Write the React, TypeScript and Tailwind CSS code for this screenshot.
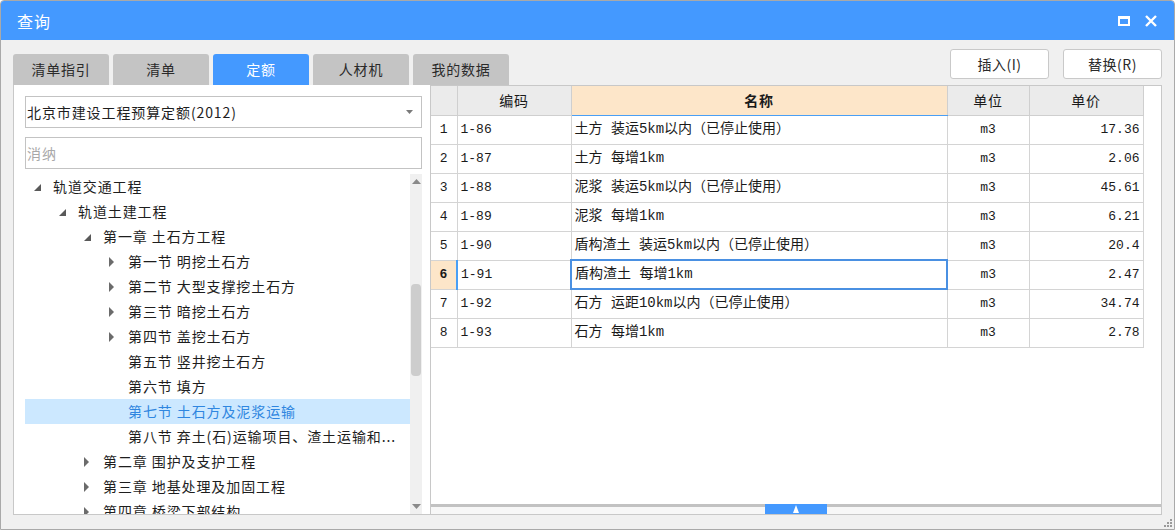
import React from "react";

const tabs = ["清单指引", "清单", "定额", "人材机", "我的数据"];

type Node = { label: string; level: number; arrow: "open" | "closed" | "none"; selected?: boolean };

const tree: Node[] = [
  { label: "轨道交通工程", level: 0, arrow: "open" },
  { label: "轨道土建工程", level: 1, arrow: "open" },
  { label: "第一章 土石方工程", level: 2, arrow: "open" },
  { label: "第一节 明挖土石方", level: 3, arrow: "closed" },
  { label: "第二节 大型支撑挖土石方", level: 3, arrow: "closed" },
  { label: "第三节 暗挖土石方", level: 3, arrow: "closed" },
  { label: "第四节 盖挖土石方", level: 3, arrow: "closed" },
  { label: "第五节 竖井挖土石方", level: 3, arrow: "none" },
  { label: "第六节 填方", level: 3, arrow: "none" },
  { label: "第七节 土石方及泥浆运输", level: 3, arrow: "none", selected: true },
  { label: "第八节 弃土(石)运输项目、渣土运输和...", level: 3, arrow: "none" },
  { label: "第二章 围护及支护工程", level: 2, arrow: "closed" },
  { label: "第三章 地基处理及加固工程", level: 2, arrow: "closed" },
  { label: "第四章 桥梁下部结构", level: 2, arrow: "closed" },
];

const rows = [
  ["1-86", "土方 装运5km以内（已停止使用）", "m3", "17.36"],
  ["1-87", "土方 每增1km", "m3", "2.06"],
  ["1-88", "泥浆 装运5km以内（已停止使用）", "m3", "45.61"],
  ["1-89", "泥浆 每增1km", "m3", "6.21"],
  ["1-90", "盾构渣土 装运5km以内（已停止使用）", "m3", "20.4"],
  ["1-91", "盾构渣土 每增1km", "m3", "2.47"],
  ["1-92", "石方 运距10km以内（已停止使用）", "m3", "34.74"],
  ["1-93", "石方 每增1km", "m3", "2.78"],
];

const ui = { fontFamily: '"Noto Sans CJK SC", "Noto Sans", sans-serif' };
const grid = { fontFamily: '"Liberation Mono", "Noto Sans CJK SC", monospace' };

function Arrow({ kind }: { kind: Node["arrow"] }) {
  if (kind === "open")
    return (
      <svg width="8" height="8" viewBox="0 0 8 8" className="mt-[2px]">
        <polygon points="7,0 7,7 0,7" fill="#595959" />
      </svg>
    );
  if (kind === "closed")
    return (
      <svg width="6" height="10" viewBox="0 0 6 10">
        <polygon points="0,0 5,5 0,10" fill="#6b6b6b" />
      </svg>
    );
  return null;
}

function TreeRow({ node }: { node: Node }) {
  return (
    <div
      className={`h-[25px] flex items-center text-[14px] tracking-[0.9px] whitespace-nowrap ${
        node.selected ? "bg-[#cce8ff] text-[#2f86e0]" : "text-[#1e1e1e]"
      }`}
      style={{ paddingLeft: 9 + node.level * 25 }}
    >
      <div className="w-[19px] flex items-center">
        <Arrow kind={node.arrow} />
      </div>
      <span>{node.label}</span>
    </div>
  );
}

export default function App() {
  return (
    <div
      className="w-[1175px] h-[530px] bg-[#f0f0f0] border border-[#a9a9a9] rounded-t-[4px] overflow-hidden flex flex-col"
      style={ui}
    >
      {/* title bar */}
      <div className="h-[39px] bg-[#4499ff] flex items-center justify-between pl-[16px] pr-[17px] shrink-0">
        <span className="text-white text-[16px] tracking-[1px]">查询</span>
        <div className="flex items-center gap-[15px]">
          <div className="w-[12px] h-[10px] border-2 border-t-[3px] border-white" />
          <svg width="12" height="12" viewBox="0 0 12 12">
            <path d="M1 1 L11 11 M11 1 L1 11" stroke="white" strokeWidth="2.4" />
          </svg>
        </div>
      </div>

      <div className="flex-1 min-h-0 flex flex-col pl-[12px] pr-[12px] pt-[9px] pb-[14px]">
        {/* tabs + buttons */}
        <div className="flex justify-between h-[36px] shrink-0">
          <div className="flex items-end gap-[4px]">
            {tabs.map((t) => (
              <div
                key={t}
                className={`w-[96px] h-[31px] rounded-t-[3px] flex items-center justify-center text-[14px] tracking-[0.8px] ${
                  t === "定额" ? "bg-[#4499ff] text-white" : "bg-[#c4c4c4] text-[#2a2a2a]"
                }`}
              >
                {t}
              </div>
            ))}
          </div>
          <div className="flex gap-[14px] items-start">
            {["插入(I)", "替换(R)"].map((b) => (
              <div
                key={b}
                className="w-[99px] h-[30px] bg-white border border-[#c9c9c9] rounded-[3px] flex items-center justify-center text-[14px] tracking-[0.5px] text-[#2a2a2a]"
              >
                {b}
              </div>
            ))}
          </div>
        </div>

        {/* panes */}
        <div className="flex-1 flex min-h-0">
          {/* left pane */}
          <div className="w-[417px] shrink-0 bg-white border-l border-b border-[#c8c8c8] pl-[11px] pr-[8px] pt-[11px] flex flex-col min-h-0">
            <div className="h-[32px] shrink-0 border border-[#c3c3c3] flex items-center justify-between pl-[1px] pr-[8px] text-[14px] tracking-[0.9px] text-[#1e1e1e]">
              <span>北京市建设工程预算定额(2012)</span>
              <svg width="7" height="4" viewBox="0 0 7 4">
                <polygon points="0,0 7,0 3.5,4" fill="#7a7a7a" />
              </svg>
            </div>
            <div className="h-[32px] shrink-0 mt-[9px] border border-[#c3c3c3] flex items-center pl-[1px] text-[14px] tracking-[0.9px] text-[#a8a8a8]">
              消纳
            </div>
            <div className="flex-1 flex min-h-0 mt-[4px] pt-[1px]">
              <div className="flex-1 overflow-hidden">
                {tree.map((n) => (
                  <TreeRow key={n.label} node={n} />
                ))}
              </div>
              <div className="w-[12px] bg-[#f0f0f0] flex flex-col items-center justify-between py-[5px]">
                <svg width="9" height="5" viewBox="0 0 9 5">
                  <polygon points="0,5 9,5 4.5,0" fill="#8a8a8a" />
                </svg>
                <div className="flex-1 w-full flex flex-col pt-[100px] pb-[128px] px-[1px]">
                  <div className="flex-1 bg-[#cdcdcd] rounded-[4px]" />
                </div>
                <svg width="9" height="5" viewBox="0 0 9 5">
                  <polygon points="0,0 9,0 4.5,5" fill="#8a8a8a" />
                </svg>
              </div>
            </div>
          </div>

          {/* right pane */}
          <div className="flex-1 border border-[#c8c8c8] bg-white flex flex-col">
            <div className="flex-1 overflow-hidden" style={grid}>
              <table className="border-collapse table-fixed text-[14px] text-[#1a1a1a]" style={{ width: 712 }}>
                <colgroup>
                  <col style={{ width: 26 }} />
                  <col style={{ width: 114 }} />
                  <col style={{ width: 376 }} />
                  <col style={{ width: 82 }} />
                  <col style={{ width: 114 }} />
                </colgroup>
                <thead>
                  <tr className="h-[29px] text-[14px]" style={ui}>
                    <th className="bg-[#ebebeb] border border-[#cfcfcf] border-t-0 border-l-0 font-normal" />
                    <th className="bg-[#ebebeb] border border-[#cfcfcf] border-t-0 font-normal tracking-[0.8px]">编码</th>
                    <th className="bg-[#fde6c9] border border-[#cfcfcf] border-t-0 border-b-[#4a9ff5] font-bold tracking-[0.8px]">名称</th>
                    <th className="bg-[#ebebeb] border border-[#cfcfcf] border-t-0 font-normal tracking-[0.8px]">单位</th>
                    <th className="bg-[#ebebeb] border border-[#cfcfcf] border-t-0 font-normal tracking-[0.8px]">单价</th>
                  </tr>
                </thead>
                <tbody>
                  {rows.map((r, i) => {
                    const sel = i === 5;
                    return (
                      <tr key={r[0]} className="h-[29px]">
                        <td
                          className={`border border-[#d4d4d4] border-l-0 text-center text-[13px] ${
                            sel ? "bg-[#fde6c9] font-bold" : ""
                          }`}
                        >
                          {i + 1}
                        </td>
                        <td
                          className={`border border-[#d4d4d4] pl-[3px] text-[13px] ${sel ? "border-l-2 border-l-[#4a9ff5]" : ""}`}
                        >
                          {r[0]}
                        </td>
                        <td
                          className={`pl-[3px] whitespace-nowrap ${
                            sel ? "border-2 border-[#4a90e2]" : "border border-[#d4d4d4]"
                          }`}
                        >
                          {r[1]}
                        </td>
                        <td className="border border-[#d4d4d4] text-center text-[13px]">{r[2]}</td>
                        <td className="border border-[#d4d4d4] text-right pr-[3px] text-[13px]">{r[3]}</td>
                      </tr>
                    );
                  })}
                </tbody>
              </table>
            </div>
            {/* splitter */}
            <div className="h-[3px] bg-[#c2c2c2] relative">
              <div className="absolute left-[334px] top-0 w-[62px] h-[10px] bg-[#4499ff] flex items-center justify-center">
                <svg width="6" height="8" viewBox="0 0 6 8">
                  <polygon points="3,0 6,8 0,8" fill="white" />
                </svg>
              </div>
            </div>
            <div className="h-[7px] bg-[#f7f7f7]" />
          </div>
        </div>
      </div>

      {/* resize grip */}
      <div className="relative">
        <div className="absolute right-[2px] bottom-[2px] grid grid-cols-3 gap-[1px]">
          {[0, 0, 1, 0, 1, 1, 1, 1, 1].map((v, i) => (
            <div key={i} className={`w-[2px] h-[2px] ${v ? "bg-[#9a9a9a]" : ""}`} />
          ))}
        </div>
      </div>
    </div>
  );
}
